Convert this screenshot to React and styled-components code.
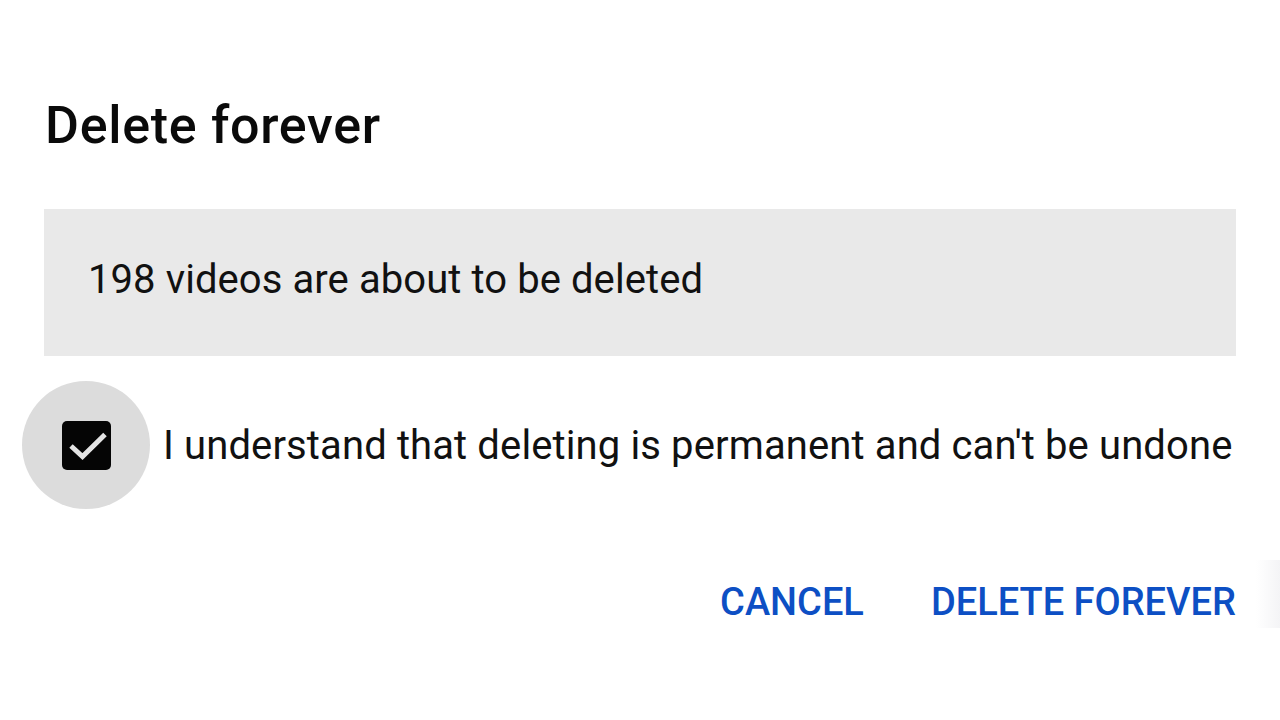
import React, { useState } from 'react';
import styled, { createGlobalStyle } from 'styled-components';

const GlobalStyle = createGlobalStyle`
  html, body {
    margin: 0;
    padding: 0;
    background: #ffffff;
  }
  body {
    font-family: Roboto, 'Noto Sans', Arial, sans-serif;
    color: #0f0f0f;
  }
`;

const Dialog = () => {
  const [checked, setChecked] = useState(true);

  return (
    <Page>
      <Title>Delete forever</Title>
      <InfoBox>198 videos are about to be deleted</InfoBox>
      <ConfirmRow onClick={() => setChecked(!checked)}>
        <CheckRipple>
          <CheckBox $checked={checked}>
            {checked && (
              <svg width="49" height="49" viewBox="0 0 49 49">
                <path
                  d="M9 25 L20.5 35.5 L43 13.5"
                  fill="none"
                  stroke="#e4e4e4"
                  strokeWidth="5"
                />
              </svg>
            )}
          </CheckBox>
        </CheckRipple>
        <ConfirmText>I understand that deleting is permanent and can't be undone</ConfirmText>
      </ConfirmRow>
      <Actions>
        <ActionButton>CANCEL</ActionButton>
        <ActionButton>DELETE FOREVER</ActionButton>
      </Actions>
      <EdgeShade />
    </Page>
  );
};

export default function App() {
  return (
    <>
      <GlobalStyle />
      <Dialog />
    </>
  );
}

const Page = styled.div`
  position: relative;
  width: 1280px;
  height: 720px;
  box-sizing: border-box;
  padding: 90px 44px 0 44px;
  display: flex;
  flex-direction: column;
  overflow: hidden;
`;

const Title = styled.h1`
  margin: 0 0 0 1px;
  font-size: 52px;
  font-weight: 500;
  letter-spacing: 0.7px;
  line-height: 72px;
  color: #0a0a0a;
`;

const InfoBox = styled.div`
  margin-top: 47px;
  height: 147px;
  width: 1192px;
  box-sizing: border-box;
  padding: 0 0 6px 44px;
  display: flex;
  align-items: center;
  background: #e9e9e9;
  font-size: 40px;
  letter-spacing: 0.08px;
  color: #111111;
`;

const ConfirmRow = styled.div`
  margin-top: 25px;
  margin-left: -22px;
  display: flex;
  align-items: center;
  gap: 13px;
  cursor: pointer;
`;

const CheckRipple = styled.div`
  width: 128px;
  height: 128px;
  border-radius: 50%;
  background: #dcdcdc;
  display: flex;
  align-items: center;
  justify-content: center;
  flex-shrink: 0;
`;

const CheckBox = styled.div`
  width: 49px;
  height: 49px;
  box-sizing: border-box;
  border-radius: 5px;
  overflow: hidden;
  background: ${({ $checked }) => ($checked ? '#050505' : 'transparent')};
  border: ${({ $checked }) => ($checked ? 'none' : '3px solid #606060')};
  display: flex;
  align-items: center;
  justify-content: center;
`;

const ConfirmText = styled.span`
  font-size: 40px;
  letter-spacing: 0.12px;
  color: #111111;
  white-space: nowrap;
`;

const Actions = styled.div`
  margin-top: 71px;
  display: flex;
  justify-content: flex-end;
  gap: 67px;
`;

const ActionButton = styled.button`
  border: none;
  background: none;
  padding: 0;
  font-family: Roboto, 'Noto Sans', Arial, sans-serif;
  font-size: 38px;
  font-weight: 500;
  color: #0d4fc4;
  cursor: pointer;
`;

const EdgeShade = styled.div`
  position: absolute;
  right: 0;
  top: 560px;
  width: 24px;
  height: 68px;
  background: linear-gradient(to right, rgba(240, 240, 244, 0), #f4f4f6);
`;
